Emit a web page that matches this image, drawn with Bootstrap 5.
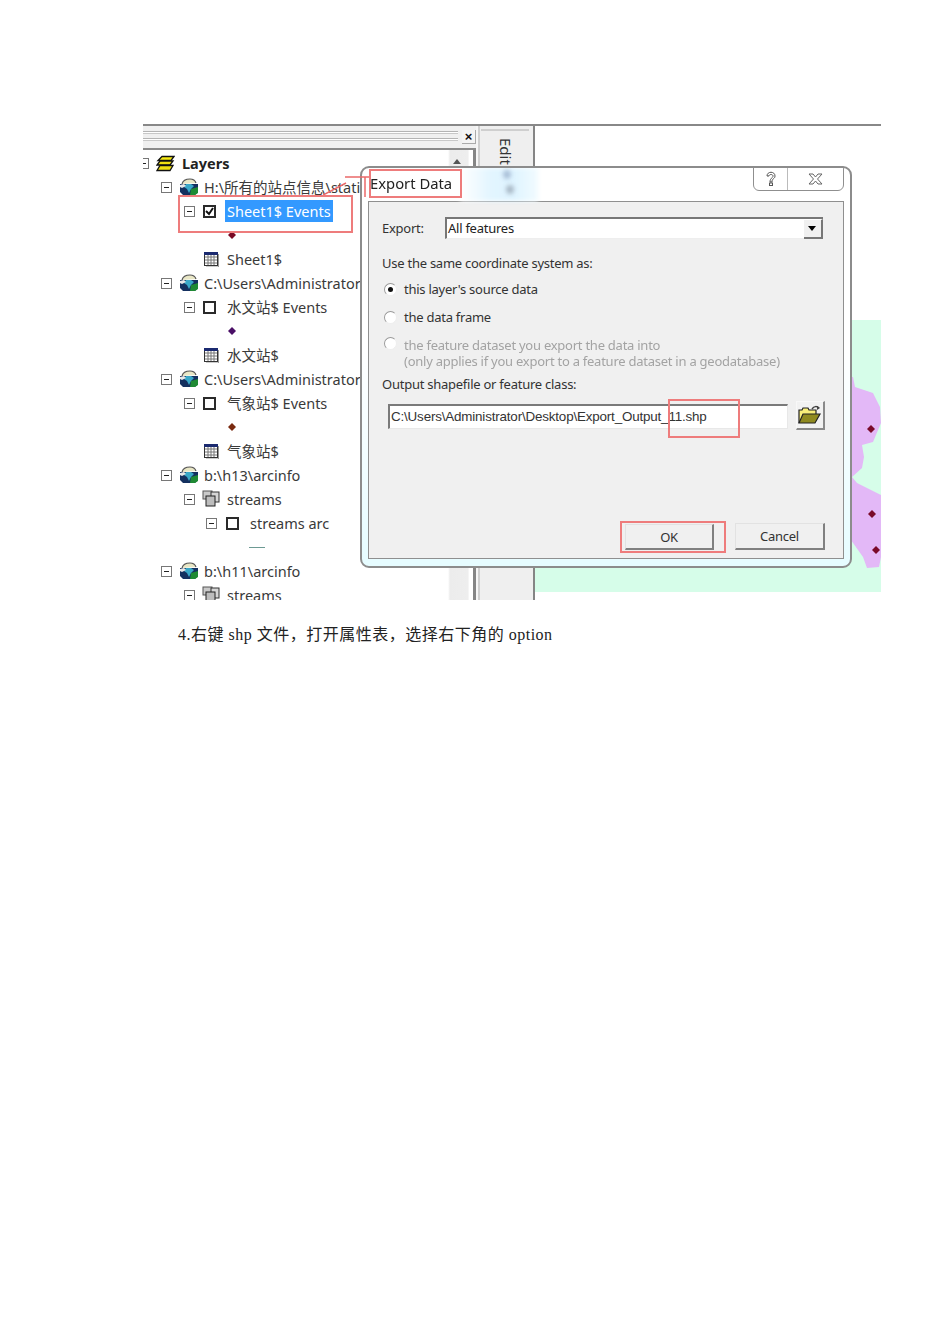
<!DOCTYPE html>
<html lang="zh">
<head>
<meta charset="utf-8">
<title>Export Data</title>
<link href="https://cdn.jsdelivr.net/npm/bootstrap@5.3.0/dist/css/bootstrap.min.css" rel="stylesheet">
<style>
html,body{background:#fff;height:1344px;overflow:hidden}
.sheet{padding:124px 0 0 143px}
.shot{position:relative;width:738px;height:476px;overflow:hidden;filter:blur(.4px);font-family:"Noto Sans","Noto Sans CJK SC",sans-serif;color:#333;font-size:14.5px;line-height:20px}
.topline{height:2px;background:#888}
.shot-body{height:474px}
.dock{width:392px;height:474px}
.dock-main{width:333px}
.dock-bar{height:24px;background:#f0f0f0;border-bottom:2px solid #8a8a8a}
.grips{width:316px;padding-top:5px}
.grip{height:3px;border-top:1px solid #b4b4b4;border-bottom:1px solid #c8c8c8;background:#fff;margin-bottom:4px}
.closer{width:14px;height:14px;margin-left:4px;margin-top:4px;background:#f4f4f4;border-right:1px solid #aaa;border-bottom:1px solid #aaa;font:700 13px/13px "Liberation Sans",sans-serif;color:#111;text-align:center}
.tree-pane{height:450px;border-right:3px solid #858585}
.tree{width:305px;background:#fff;overflow:hidden;padding-top:1px}
.vscroll{width:25px;background:linear-gradient(90deg,#fff 0,#ececec 8%,#eee 80%,#fff 85%);text-align:center}
.arrow-up{width:0;height:0;border:4px solid transparent;border-bottom:5px solid #555;border-top:0;margin:9px 0 0 5px}
.tr{height:24px;white-space:nowrap;color:#3a3a3a}
.p-l0{padding-left:0}.p-l1{padding-left:18px}.p-l2{padding-left:41px}.p-l3{padding-left:63px}.p-tab{padding-left:61px}.p-sym{padding-left:85px}.p-line{padding-left:106px}
.exp{flex:none;width:11px;height:11px;border:1px solid #777;position:relative;background:#fff}
.exp::after{content:"";position:absolute;left:2px;right:2px;top:4px;height:1px;background:#222}
.exp-first{margin-left:-5px}
.ic1{margin-left:7px;margin-right:5px;flex:none}
.ic0{margin-left:7px;margin-right:7px;flex:none}
.ic2{margin-left:7px;margin-right:7px;flex:none}
.ictab{margin-right:8px;flex:none}
.chk{flex:none;width:13px;height:13px;border:2px solid #2a2a2a;background:#fff;margin-left:8px;margin-right:11px;position:relative}
.chk-3{margin-left:9px}
.layers-name{font-weight:700;color:#222}
.sel{background:#3399ff;color:#fff;padding:1px 2px;margin-left:-2px;line-height:20px}
.ln-sym{width:16px;height:1px;background:#6d9a93}
.edit-tab{width:59px;background:linear-gradient(90deg,#f6f6f6 0 2px,#cfcfcf 2px 4px,#efefef 4px);border-right:2px solid #858585}
.edit-line{height:2px;background:#cfcfcf;margin:3px 4px 0 5px}
.edit-text{writing-mode:vertical-rl;font-size:15px;line-height:18px;color:#333;margin:7px 0 0 21px;height:40px}
.map-area{width:346px}
.mint{margin-top:194px;height:272px;background:#d6fde9;display:block}
.dlg{position:absolute;left:217px;top:42px;width:492px;height:402px;border:2px solid #8c8c8c;border-radius:9px;background:linear-gradient(180deg,#fff 0,#fff 45%,#e6fcff 100%);color:#333;font-size:13px;letter-spacing:-.25px;overflow:hidden}
.dlg-head{height:33px;position:relative}
.glow{position:absolute;left:98px;top:0;width:78px;height:33px;background:linear-gradient(90deg,#fff,#e2f5ff 40%,#dff4ff 70%,#f2fbff);filter:blur(2px)}
.glow-dot{position:absolute;width:8px;height:9px;border-radius:50%;background:#a9bfd8;filter:blur(2px)}
.dot-a{left:141px;top:2px}.dot-b{left:144px;top:17px;background:#a8b8c6}
.dlg-title{position:absolute;left:8px;top:5px;font-size:14.8px;letter-spacing:0;color:#222;line-height:20px}
.capbtns{position:absolute;right:6px;top:-2px;width:91px;height:25px;border:1px solid #8f8f8f;border-radius:0 0 6px 6px;background:#fff}
.capbtns>div{height:23px}
.cap-help{width:34px;border-right:1px solid #bbb}
.pane{margin:0 6px;height:358px;background:#f0f0f0;border:1px solid #8f8f8f}
.lbl{height:20px;padding-left:13px;white-space:nowrap}
.combo-row{margin-top:15px;height:22px;white-space:nowrap}
.combo-lbl{width:76px;padding-left:13px}
.combo{width:378px;height:22px;background:#fff;border-top:2px solid #777;border-left:2px solid #777;border-bottom:1px solid #eee;padding-left:1px;color:#222;line-height:19px;position:relative}
.combo-btn{position:absolute;right:0;top:0;width:19px;height:20px;background:#f0f0f0;border-right:2px solid #777;border-bottom:2px solid #777;border-top:1px solid #fff}
.combo-tri{width:0;height:0;border:4.5px solid transparent;border-top:5px solid #000;border-bottom:0;margin:6px 0 0 4px}
.m14{margin-top:14px}.m6{margin-top:6px}.m8{margin-top:8px}.m10{margin-top:10px}.m5{margin-top:5px}
.rad{flex:none;width:13px;height:13px;border-radius:50%;background:#fff;border:1px solid #9a9a9a;border-right-color:#eee;border-bottom-color:#eee;margin-left:2px;margin-right:7px;position:relative}
.rad-on::after{content:"";position:absolute;left:3px;top:3px;width:5px;height:5px;border-radius:50%;background:#111}
.off{color:#a3a3a3}
.off-lines{line-height:16px;padding-left:35px;position:relative;white-space:nowrap;height:32px}
.rad-float{position:absolute;left:15px;top:0;margin:0}
.out-row{margin-top:7px;padding-left:19px;height:29px}
.pathbox{width:400px;height:25px;background:#fff;border-top:2px solid #7a7a7a;border-left:2px solid #7a7a7a;border-bottom:1px solid #e8e8e8;border-right:1px solid #e8e8e8;padding-left:1px;font-family:"Liberation Sans",sans-serif;font-size:13.4px;letter-spacing:-.17px;line-height:22px;color:#333;margin-top:3px;white-space:nowrap}
.folder{width:29px;height:29px;margin-left:8px;background:#f2f2f2;border:1px solid #f8f8f8;border-right:2px solid #8a8a8a;border-bottom:2px solid #8a8a8a}
.foot{margin-top:auto;padding-right:18px;padding-bottom:8px}
.xbtn{background:#f0f0f0;border-radius:0;border:0;border-top:1px solid #e2e2e2;border-left:1px solid #e2e2e2;border-right:2px solid #808080;border-bottom:2px solid #808080;padding:0;font-size:13px;letter-spacing:-.25px;color:#333;line-height:22px}
.b-ok{width:89px;height:26px}
.b-can{width:90px;height:27px;margin-left:21px}
.pane-col{height:356px}
.rbox{position:absolute;border:2px solid #ee7c7c;pointer-events:none}
.rb-a{left:226px;top:45px;width:93px;height:29px}
.rb-b{left:35px;top:71px;width:175px;height:38px}
.rb-c{left:525px;top:275px;width:72px;height:39px}
.rb-d{left:477px;top:397px;width:106px;height:32px}
.rlines{position:absolute;left:180px;top:50px}
.capt{margin:24px 0 0 35px;font-family:"Liberation Serif","Noto Sans CJK SC",serif;font-size:16px;line-height:22px;color:#222;letter-spacing:.5px;width:600px}
</style>
</head>
<body>
<svg width="0" height="0" class="d-block position-absolute">
<symbol id="frame" viewBox="0 0 20 18">
<path d="M3 6c1-4 4-5 8-5 3 0 5 1 6 4" fill="#e9e7c6" stroke="#555" stroke-width="1.200"/>
<path d="M1 6h18v8l-3 3H4l-3-3z" fill="#14305f"/>
<path d="M7 6l5 0 3 2-3 3-2 4-2-4-3-2z" fill="#39a8c8"/>
<path d="M12 11l7-2v6l-3 2h-5z" fill="#1f8a34"/>
<path d="M1 7l4-1 2 2-4 2-2-1z" fill="#e9e9e9"/>
</symbol>
<symbol id="tab" viewBox="0 0 15 15">
<rect x=".5" y=".5" width="13" height="13" fill="#fff" stroke="#333"/>
<rect x="0" y="0" width="14" height="3" fill="#1b2a70"/>
<path d="M1 5h12M1 8h12M1 11h12M4 3v10M7 3v10M10 3v10" stroke="#777" fill="none"/>
<path d="M14.500 2v13H2" stroke="#999" fill="none"/>
</symbol>
<symbol id="group" viewBox="0 0 18 18">
<rect x="1" y="1" width="9" height="8" fill="#c9c9c9" stroke="#555"/>
<rect x="9" y="2" width="8" height="10" fill="#d6d6d6" stroke="#333"/>
<rect x="4" y="6" width="9" height="10" fill="#bdbdbd" stroke="#222"/>
</symbol>
<symbol id="dia" viewBox="0 0 8 8"><path d="M4 0l4 4-4 4-4-4z"/></symbol>
</svg>
<div class="sheet">
<div class="shot">
<div class="topline"></div>
<div class="shot-body d-flex">
<div class="dock d-flex">
<div class="dock-main d-flex flex-column">
<div class="dock-bar d-flex">
<div class="grips"><div class="grip"></div><div class="grip"></div></div>
<div class="closer">×</div>
</div>
<div class="tree-pane d-flex">
<div class="tree">
<div class="tr d-flex align-items-center p-l0"><span class="exp exp-first"></span><svg class="ic0" width="19" height="17" viewBox="0 0 19 16"><path d="M6 1h12l-3 4H2z" fill="#f7ea12" stroke="#111" stroke-width="1.300"/><path d="M4 5.500h13l-3 4H1z" fill="#f0e010" stroke="#111" stroke-width="1.300"/><path d="M4 10h13l-3 5H1z" fill="#f0e010" stroke="#111" stroke-width="1.300"/></svg><span class="layers-name">Layers</span></div>
<div class="tr d-flex align-items-center p-l1"><span class="exp"></span><svg class="ic1" width="20" height="18"><use href="#frame"/></svg><span>H:\所有的站点信息\stati</span></div>
<div class="tr d-flex align-items-center p-l2"><span class="exp"></span><span class="chk"><svg class="d-block" width="9" height="9" viewBox="0 0 9 9"><path d="M1 4l3 3 4-6" fill="none" stroke="#111" stroke-width="2"/></svg></span><span class="sel">Sheet1$ Events</span></div>
<div class="tr d-flex align-items-center p-sym"><svg width="8" height="8" fill="#7a0a24"><use href="#dia"/></svg></div>
<div class="tr d-flex align-items-center p-tab"><svg class="ictab" width="15" height="15"><use href="#tab"/></svg><span>Sheet1$</span></div>
<div class="tr d-flex align-items-center p-l1"><span class="exp"></span><svg class="ic1" width="20" height="18"><use href="#frame"/></svg><span>C:\Users\Administrator</span></div>
<div class="tr d-flex align-items-center p-l2"><span class="exp"></span><span class="chk"></span><span>水文站$ Events</span></div>
<div class="tr d-flex align-items-center p-sym"><svg width="8" height="8" fill="#4a0f66"><use href="#dia"/></svg></div>
<div class="tr d-flex align-items-center p-tab"><svg class="ictab" width="15" height="15"><use href="#tab"/></svg><span>水文站$</span></div>
<div class="tr d-flex align-items-center p-l1"><span class="exp"></span><svg class="ic1" width="20" height="18"><use href="#frame"/></svg><span>C:\Users\Administrator</span></div>
<div class="tr d-flex align-items-center p-l2"><span class="exp"></span><span class="chk"></span><span>气象站$ Events</span></div>
<div class="tr d-flex align-items-center p-sym"><svg width="8" height="8" fill="#7a2a10"><use href="#dia"/></svg></div>
<div class="tr d-flex align-items-center p-tab"><svg class="ictab" width="15" height="15"><use href="#tab"/></svg><span>气象站$</span></div>
<div class="tr d-flex align-items-center p-l1"><span class="exp"></span><svg class="ic1" width="20" height="18"><use href="#frame"/></svg><span>b:\h13\arcinfo</span></div>
<div class="tr d-flex align-items-center p-l2"><span class="exp"></span><svg class="ic2" width="18" height="18"><use href="#group"/></svg><span>streams</span></div>
<div class="tr d-flex align-items-center p-l3"><span class="exp"></span><span class="chk chk-3"></span><span>streams arc</span></div>
<div class="tr d-flex align-items-center p-line"><span class="ln-sym"></span></div>
<div class="tr d-flex align-items-center p-l1"><span class="exp"></span><svg class="ic1" width="20" height="18"><use href="#frame"/></svg><span>b:\h11\arcinfo</span></div>
<div class="tr d-flex align-items-center p-l2"><span class="exp"></span><svg class="ic2" width="18" height="18"><use href="#group"/></svg><span>streams</span></div>
</div>
<div class="vscroll"><div class="arrow-up"></div></div>
</div>
</div>
<div class="edit-tab">
<div class="edit-line"></div>
<div class="edit-text">Edit</div>
</div>
</div>
<div class="map-area">
<svg class="mint" width="346" height="272" viewBox="0 0 346 272">
<polygon fill="#e3b8f7" points="310,57 318,57 320,67 338,73 345,87 346,103 338,122 327,125 329,137 327,148 317,157 322,163 346,175 346,237 344,247 332,248 328,237 311,213 300,213 300,57"/>
<g fill="#7a0a2a">
<path d="M336 105l4 4-4 4-4-4z"/><path d="M337 190l4 4-4 4-4-4z"/><path d="M341 226l4 4-4 4-4-4z"/>
</g>
</svg>
</div>
</div>

<div class="dlg d-flex flex-column">
<div class="dlg-head">
<div class="glow"></div><div class="glow-dot dot-a"></div><div class="glow-dot dot-b"></div>
<div class="dlg-title">Export Data</div>
<div class="capbtns d-flex">
<div class="cap-help d-flex align-items-center justify-content-center"><svg width="10" height="15" viewBox="0 0 10 15"><path d="M1 5c0-5 8-5 8 0 0 3-3 2-3 6H4c0-4 3-4 3-6 0-2-4-2-4 0z" fill="#fff" stroke="#555"/><rect x="3.500" y="12" width="3" height="2.500" fill="#fff" stroke="#555"/></svg></div>
<div class="flex-grow-1 d-flex align-items-center justify-content-center"><svg width="15" height="12" viewBox="0 0 15 12"><path d="M1 1h4l2.500 3L10 1h4L9.500 6 14 11h-4L7.500 8 5 11H1l4.500-5z" fill="#fff" stroke="#666"/></svg></div>
</div>
</div>
<div class="pane">
<div class="pane-col d-flex flex-column">
<div class="combo-row d-flex align-items-center"><div class="combo-lbl">Export:</div><div class="combo">All features<div class="combo-btn"><div class="combo-tri"></div></div></div></div>
<div class="lbl m14 d-flex align-items-center">Use the same coordinate system as:</div>
<div class="lbl m6 d-flex align-items-center"><span class="rad rad-on"></span><span>this layer's source data</span></div>
<div class="lbl m8 d-flex align-items-center"><span class="rad"></span><span>the data frame</span></div>
<div class="off-lines off m10"><span class="rad rad-float"></span>the feature dataset you export the data into<br>(only applies if you export to a feature dataset in a geodatabase)</div>
<div class="lbl m5 d-flex align-items-center">Output shapefile or feature class:</div>
<div class="out-row d-flex align-items-start">
<div class="pathbox">C:\Users\Administrator\Desktop\Export_Output_11.shp</div>
<div class="folder d-flex align-items-center justify-content-center"><svg width="24" height="20" viewBox="0 0 24 20"><path d="M14 4c2-3 5-3 7-1" fill="none" stroke="#444" stroke-width="1.500"/><path d="M19 1l3 2-3 2z" fill="#444"/><path d="M1 18V5h3l1-2h5l1 2h7v4" fill="#f7ee7a" stroke="#222" stroke-width="1.200"/><path d="M1 18l4-9h17l-5 9z" fill="#8f8a20" stroke="#222" stroke-width="1.200"/></svg></div>
</div>
<div class="foot d-flex justify-content-end align-items-end">
<button type="button" class="btn xbtn b-ok">OK</button>
<button type="button" class="btn xbtn b-can">Cancel</button>
</div>
</div>
</div>
</div>

<svg class="rlines" width="60" height="30"><path d="M0 21L23 9M22 3h24M42 3v20" fill="none" stroke="#ea6a6a" stroke-width="1.500"/></svg>
<div class="rbox rb-a"></div>
<div class="rbox rb-b"></div>
<div class="rbox rb-c"></div>
<div class="rbox rb-d"></div>
</div>
<p class="capt mb-0">4.右键 shp 文件，打开属性表，选择右下角的 option</p>
</div>
</body>
</html>
